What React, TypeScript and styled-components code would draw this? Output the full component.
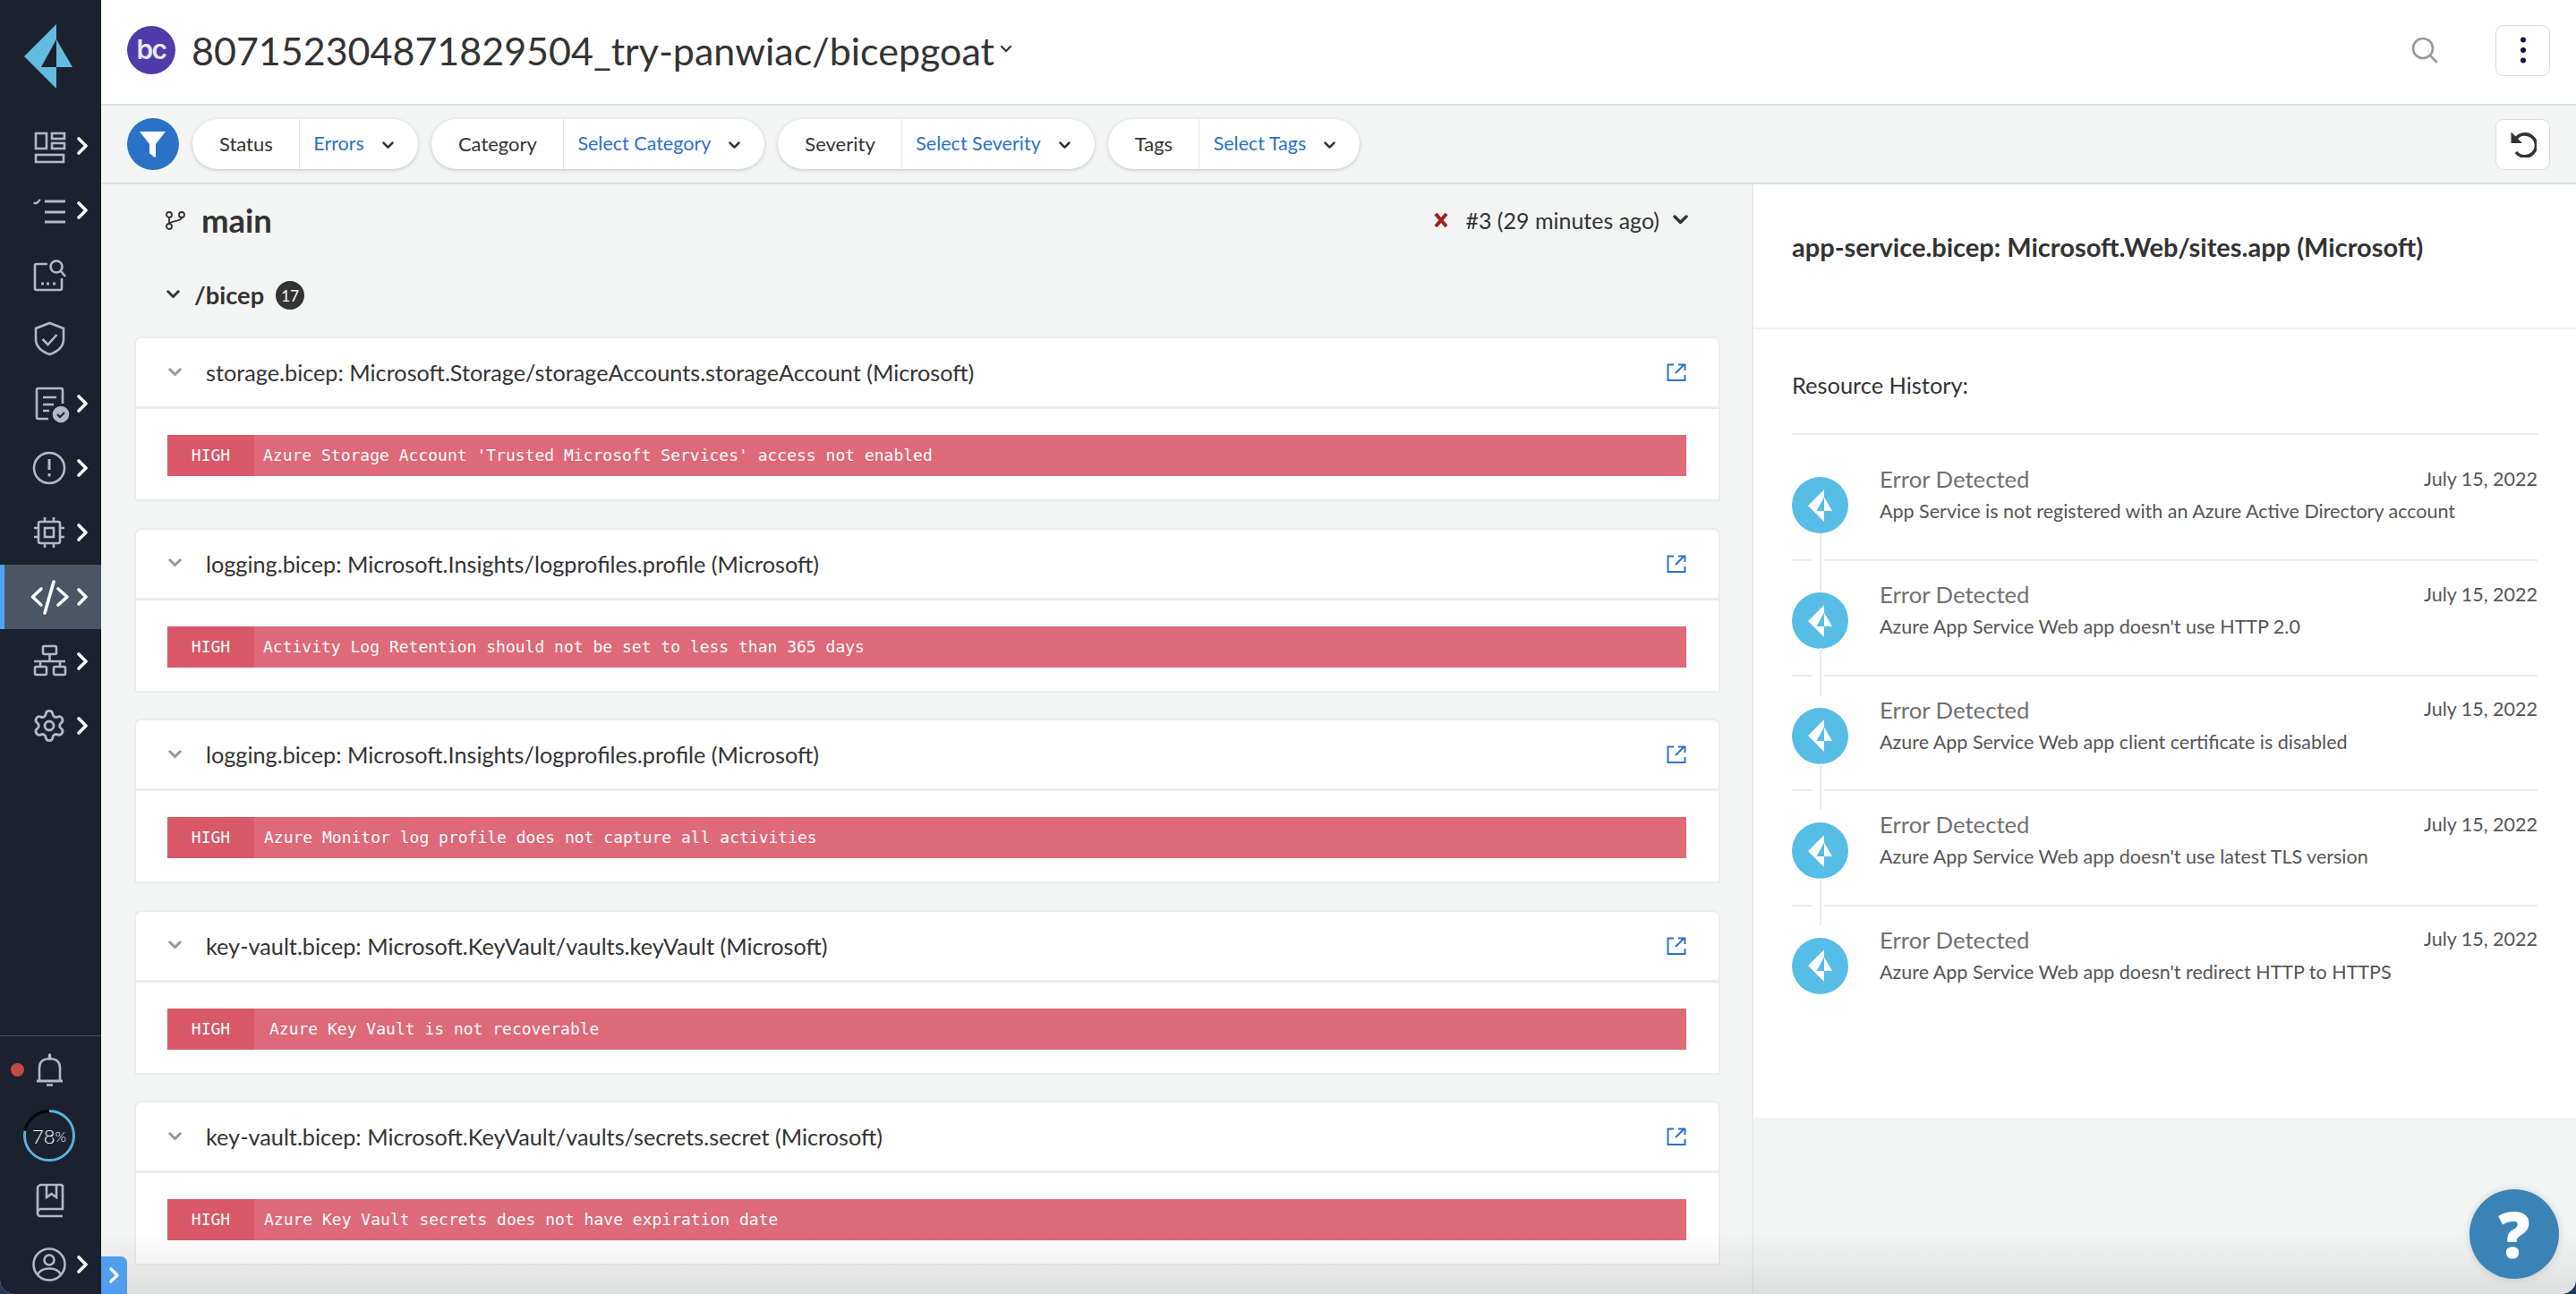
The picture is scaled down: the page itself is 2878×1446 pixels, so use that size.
import React from 'react';
import styled, { createGlobalStyle } from 'styled-components';
import { Settings } from 'lucide-react';

const GlobalStyle = createGlobalStyle`
  html, body {
    margin: 0;
    height: 100%;
    background: #1d3a5c;
    overflow: hidden;
  }
  #root { height: 100%; }
  * { box-sizing: border-box; }
`;

const Page = styled.div`
  position: relative;
  display: flex;
  width: 2878px;
  height: 1446px;
  overflow: hidden;
  border-radius: 0 0 16px 16px;
  background: #f3f5f4;
  font-family: Lato, 'Open Sans', sans-serif;
  color: #333;
`;

const BottomShade = styled.div`
  position: absolute;
  left: 113px;
  right: 0;
  bottom: 0;
  height: 70px;
  pointer-events: none;
  background: linear-gradient(to bottom, rgba(0, 0, 0, 0), rgba(0, 0, 0, 0.09));
`;

/* sidebar */
const Sidebar = styled.nav`
  display: flex;
  flex-direction: column;
  flex: none;
  width: 113px;
  height: 100%;
  overflow: hidden;
  background: #1b212d;
`;

const LogoSlot = styled.div`
  flex: none;
  height: 127px;
  padding: 27px 0 0 27px;
  svg { display: block; }
`;

const NavItem = styled.div<{ $active?: boolean }>`
  position: relative;
  display: flex;
  flex: none;
  align-items: center;
  height: 72px;
  color: ${(p) => (p.$active ? '#fff' : '#b3b8c4')};
  background: ${(p) => (p.$active ? '#4a5666' : 'transparent')};
  border-left: ${(p) => (p.$active ? '5px solid #4da3f5' : '0')};
  padding-left: ${(p) => (p.$active ? '30px' : '35px')};
  svg.nav-icon { flex: none; overflow: visible; }
`;

const NavChevron = styled.svg`
  flex: none;
  margin-left: 11px;
`;

const SidebarBottom = styled.div`
  display: flex;
  flex-direction: column;
  margin-top: auto;
  margin-bottom: -3px;
  padding-top: 3px;
  border-top: 1px solid #4a5060;
`;

const RedDot = styled.span`
  position: absolute;
  left: 12px;
  top: 27px;
  width: 15px;
  height: 15px;
  border-radius: 50%;
  background: #c44a40;
`;

const RingWrap = styled.div`
  position: relative;
  width: 60px;
  height: 60px;
  margin-left: -10px;
  svg { display: block; }
`;

const RingLabel = styled.span`
  position: absolute;
  inset: 0;
  display: flex;
  align-items: center;
  justify-content: center;
  color: #fff;
  font-size: 22px;
  font-weight: 300;
  small { font-size: 16px; }
`;

const CollapseTab = styled.div`
  position: absolute;
  left: 113px;
  bottom: 0;
  display: flex;
  align-items: center;
  justify-content: center;
  width: 29px;
  height: 42px;
  border-radius: 0 7px 0 0;
  background: #4f9fee;
`;

/* main column */
const Main = styled.div`
  display: flex;
  flex: 1;
  flex-direction: column;
  min-width: 0;
`;

const Header = styled.header`
  display: flex;
  flex: none;
  align-items: center;
  height: 118px;
  padding: 0 29px 4px 29px;
  background: #fff;
  border-bottom: 2px solid #dfe1e1;
`;

const BcBadge = styled.div`
  display: flex;
  flex: none;
  align-items: center;
  justify-content: center;
  width: 54px;
  height: 54px;
  border-radius: 50%;
  background: #4f3baa;
  color: #e9e6f8;
  font-family: Inter, sans-serif;
  font-size: 30px;
  font-weight: 600;
  letter-spacing: -1.5px;
  padding-bottom: 3px;
`;

const RepoTitle = styled.h1`
  margin: 2px 0 0 18px;
  font-size: 43px;
  font-weight: 400;
  line-height: 54px;
  color: #333;
`;

const RepoCaret = styled.svg`
  flex: none;
  margin: 0 0 2px 6px;
`;

const HeaderActions = styled.div`
  display: flex;
  align-items: center;
  margin-left: auto;
`;

const SearchButton = styled.span`
  display: flex;
  margin-right: 64px;
`;

const SquareButton = styled.button`
  display: flex;
  align-items: center;
  justify-content: center;
  width: 61px;
  height: 57px;
  padding: 0;
  background: #fff;
  border: 1px solid #dcdcdc;
  border-radius: 9px;
`;

const FilterBar = styled.div`
  display: flex;
  flex: none;
  align-items: center;
  gap: 15px;
  height: 88px;
  padding: 0 29px;
  border-bottom: 2px solid #dfe1e1;
`;

const FunnelButton = styled.div`
  flex: none;
  width: 58px;
  height: 58px;
  border-radius: 50%;
  background: #2a72c8;
  svg { display: block; }
`;

const Pill = styled.div`
  display: flex;
  flex: none;
  align-items: stretch;
  height: 56px;
  border-radius: 28px;
  background: #fff;
  box-shadow: 0 1px 4px rgba(0, 0, 0, 0.2);
  font-size: 21.5px;
`;

const PillLabel = styled.span`
  display: flex;
  align-items: center;
  padding: 0 29px 2px 30px;
  border-right: 1px solid #e3e5e5;
  color: #333;
  font-size: 22px;
`;

const PillValue = styled.span`
  display: flex;
  align-items: center;
  padding: 0 27px 2px 15.5px;
  color: #2a72c8;
  svg { margin-left: 20px; margin-top: 5px; }
`;

const ResetSlot = styled.div`
  margin-left: auto;
`;

const Content = styled.div`
  display: flex;
  flex: 1;
  min-height: 0;
`;

/* left list of findings */
const Findings = styled.section`
  flex: none;
  width: 1844px;
  padding: 0 35px 0 37px;
  overflow: hidden;
`;

const BranchRow = styled.div`
  display: flex;
  align-items: center;
  height: 80px;
  padding: 0 36px 0 34px;
`;

const BranchName = styled.h2`
  margin: 0 0 0 17px;
  font-size: 36.5px;
  font-weight: 700;
  color: #333;
`;

const RunInfo = styled.div`
  display: flex;
  align-items: center;
  margin-left: auto;
  font-size: 25px;
  color: #333;
  span { margin: 0 15px 0 19px; }
`;

const FolderRow = styled.div`
  display: flex;
  align-items: center;
  height: 86px;
  margin-bottom: 4px;
  padding-left: 36px;
`;

const FolderName = styled.span`
  margin-left: 16px;
  font-size: 27.3px;
  font-weight: 700;
  color: #333;
`;

const CountBadge = styled.span`
  display: flex;
  align-items: center;
  justify-content: center;
  width: 32px;
  height: 32px;
  margin: 2px 0 0 13px;
  border-radius: 50%;
  background: #333;
  color: #fff;
  font-size: 17px;
`;

const CardList = styled.div`
  display: flex;
  flex-direction: column;
  gap: 29.5px;
`;

const Card = styled.article`
  flex: none;
  height: 184px;
  background: #fff;
  border: 2px solid #ececec;
  border-top-left-radius: 8px;
  border-top-right-radius: 8px;
`;

const CardHead = styled.div`
  display: flex;
  align-items: center;
  height: 79px;
  padding: 0 36px;
  border-bottom: 3px solid #ececec;
`;

const CardTitle = styled.span`
  margin-left: 27px;
  font-size: 25.25px;
  color: #333;
`;

const ExternalLink = styled.svg`
  flex: none;
  margin-left: auto;
`;

const CardBody = styled.div`
  padding: 29px 36px 0 35px;
`;

const SeverityBar = styled.div`
  display: flex;
  align-items: stretch;
  height: 46px;
  background: #de6978;
  color: #fff;
  font-family: 'DejaVu Sans Mono', monospace;
  font-size: 18px;
  line-height: 46px;
`;

const SeverityTag = styled.span`
  flex: none;
  width: 97px;
  text-align: center;
  background: #d85868;
`;

const SeverityText = styled.span<{ $indent: number }>`
  padding-left: ${(p) => p.$indent}px;
  white-space: pre;
`;

/* right panel with the resource history */
const Aside = styled.aside`
  flex: 1;
  min-width: 0;
  border-left: 2px solid #e8e9ec;
`;

const AsideHead = styled.div`
  display: flex;
  align-items: center;
  height: 162px;
  padding: 0 43px 22px;
  background: #fff;
  border-bottom: 2px solid #f1f2f3;
  font-size: 29px;
  font-weight: 700;
  color: #333;
`;

const HistoryPanel = styled.div`
  height: 881px;
  padding: 0 43px 0 43px;
  background: #fff;
`;

const HistoryTitle = styled.div`
  display: flex;
  align-items: center;
  height: 118px;
  border-bottom: 2px solid #e9e9ee;
  padding-top: 8px;
  font-size: 25.4px;
  color: #333;
`;

const HistoryRow = styled.div<{ $first?: boolean; $last?: boolean }>`
  position: relative;
  display: flex;
  height: ${(p) => (p.$first ? '141px' : '128.5px')};
  padding-top: ${(p) => (p.$first ? '35px' : '23px')};
  border-bottom: ${(p) => (p.$last ? '0' : '2px solid #e9e9ee')};

  ${(p) =>
    !p.$last &&
    `&::before {
      content: '';
      position: absolute;
      left: 22px;
      bottom: -2px;
      width: 14px;
      height: 2px;
      background: #fff;
    }
    &::after {
      content: '';
      position: absolute;
      left: 31px;
      top: ${p.$first ? '110px' : '97px'};
      bottom: -${p.$first ? '35px' : '23px'};
      width: 2px;
      background: #e9e9ee;
    }`}
`;

const RowIcon = styled.div`
  flex: none;
  display: flex;
  align-items: center;
  justify-content: center;
  width: 63px;
  height: 63px;
  margin-top: 12px;
  border-radius: 50%;
  background: #55bde6;
`;

const RowText = styled.div`
  flex: 1;
  min-width: 0;
  margin-left: 35px;
`;

const RowTop = styled.div`
  display: flex;
  align-items: center;
  justify-content: space-between;
  height: 30px;
  margin-top: -1px;
`;

const RowStatus = styled.span`
  font-size: 25.7px;
  color: #707070;
`;

const RowDate = styled.span`
  margin-top: -1px;
  font-size: 21.5px;
  color: #555;
`;

const RowDescription = styled.div`
  margin-top: 6px;
  font-size: 21.5px;
  line-height: 30px;
  color: #555;
`;

const HelpButton = styled.div`
  position: absolute;
  left: 2759px;
  top: 1329px;
  display: flex;
  align-items: center;
  justify-content: center;
  width: 100px;
  height: 100px;
  border-radius: 50%;
  background: #3a83b7;
  box-shadow: 0 0 10px rgba(0, 0, 0, 0.15);
  color: #fff;
  font-family: 'Open Sans', sans-serif;
  font-size: 70px;
  font-weight: 800;
  line-height: 1;
`;

const Chevron = () => (
  <NavChevron width="12" height="22" viewBox="0 0 12 22" fill="none">
    <path d="M2 3l8 8-8 8" stroke="#fff" strokeWidth="3.6" strokeLinecap="round" strokeLinejoin="round" />
  </NavChevron>
);

const NavSvg = ({ children }: { children: React.ReactNode }) => (
  <svg className="nav-icon" width="40" height="40" viewBox="0 0 40 40" fill="none" stroke="currentColor" strokeWidth="2.6">
    {children}
  </svg>
);

const PrismaMark = ({ size, color }: { size: number; color: string }) => (
  <svg width={(size * 54) / 72} height={size} viewBox="27 27 54 72" fill={color}>
    <path d="M63 27L27 63l36 36V75H46l17-31z" />
    <path d="M63 44l18 31H63z" />
  </svg>
);

const SmallCaret = ({ color = '#333', size = 13 }: { color?: string; size?: number }) => (
  <svg width={size} height={size * 0.7} viewBox="0 0 13 9" fill="none">
    <path d="M1.5 1.5l5 5 5-5" stroke={color} strokeWidth="2.6" strokeLinecap="round" strokeLinejoin="round" />
  </svg>
);

const navIcons: React.ReactNode[] = [
  <NavSvg key="dash">
    <rect x="5" y="6" width="12" height="17" />
    <rect x="23" y="6" width="14" height="6" />
    <rect x="23" y="17" width="14" height="6" />
    <rect x="5" y="30" width="31" height="8" />
  </NavSvg>,
  <NavSvg key="list">
    <path d="M2.5 12H6l4-4" strokeWidth="2.4" />
    <path d="M15 10h23M15 22h23M15 33h23" strokeWidth="3" />
  </NavSvg>,
  <NavSvg key="scan">
    <path d="M18 8H6a2 2 0 0 0-2 2v25a2 2 0 0 0 2 2h26a2 2 0 0 0 2-2V24" />
    <circle cx="28" cy="11" r="6.5" />
    <path d="M33 16l5 6" />
    <path d="M11 30h3M17 30h3M24 30h3" strokeWidth="3" />
  </NavSvg>,
  <NavSvg key="shield">
    <path d="M20.500 2L36 8v12c0 9-7 14-15.500 17C12 34 5 29 5 20V8z" />
    <path d="M12.500 20l6 6 10-11" />
  </NavSvg>,
  <NavSvg key="report">
    <path d="M35 20V5a2 2 0 0 0-2-2H8a2 2 0 0 0-2 2v30a2 2 0 0 0 2 2h11" />
    <path d="M13 13h15M13 21h12M13 28h7" />
    <circle cx="33" cy="32" r="8" fill="currentColor" />
    <path d="M29 32l3 3 5-5" stroke="#1b212d" strokeWidth="2.2" />
  </NavSvg>,
  <NavSvg key="alert">
    <circle cx="20" cy="20" r="17" />
    <path d="M20 10v12" strokeWidth="3" />
    <path d="M20 26v3.500" strokeWidth="3" />
  </NavSvg>,
  <NavSvg key="chip">
    <rect x="8" y="8" width="24" height="24" rx="2" />
    <rect x="15" y="15" width="10" height="10" />
    <path d="M15 3v5M25 3v5M15 32v5M25 32v5M3 15h5M3 25h5M32 15h5M32 25h5" />
  </NavSvg>,
  <NavSvg key="code">
    <path d="M11 11l-9.500 9 9.500 9M30 11l10 9-10 9" strokeWidth="3.6" strokeLinecap="round" strokeLinejoin="round" />
    <path d="M25 3l-10 35" strokeWidth="3.6" strokeLinecap="round" />
  </NavSvg>,
  <NavSvg key="network">
    <rect x="13" y="3" width="15" height="9" rx="1.500" />
    <rect x="4" y="26" width="13" height="9" rx="1.500" />
    <rect x="25" y="26" width="13" height="9" rx="1.500" />
    <path d="M20.500 12v8M3 20h35M10 20v6M32 20v6" />
  </NavSvg>,
  <Settings key="gear" className="nav-icon" size={40} strokeWidth={1.7} />,
];

const chevronRows = [true, true, false, false, true, true, true, true, true, true];

const filters = [
  { label: 'Status', value: 'Errors' },
  { label: 'Category', value: 'Select Category' },
  { label: 'Severity', value: 'Select Severity' },
  { label: 'Tags', value: 'Select Tags' },
];

const findings = [
  {
    title: 'storage.bicep: Microsoft.Storage/storageAccounts.storageAccount (Microsoft)',
    message: "Azure Storage Account 'Trusted Microsoft Services' access not enabled",
    indent: 10,
  },
  {
    title: 'logging.bicep: Microsoft.Insights/logprofiles.profile (Microsoft)',
    message: 'Activity Log Retention should not be set to less than 365 days',
    indent: 10,
  },
  {
    title: 'logging.bicep: Microsoft.Insights/logprofiles.profile (Microsoft)',
    message: 'Azure Monitor log profile does not capture all activities',
    indent: 11,
  },
  {
    title: 'key-vault.bicep: Microsoft.KeyVault/vaults.keyVault (Microsoft)',
    message: 'Azure Key Vault is not recoverable',
    indent: 17,
  },
  {
    title: 'key-vault.bicep: Microsoft.KeyVault/vaults/secrets.secret (Microsoft)',
    message: 'Azure Key Vault secrets does not have expiration date',
    indent: 11,
  },
];

const history = [
  'App Service is not registered with an Azure Active Directory account',
  "Azure App Service Web app doesn't use HTTP 2.0",
  'Azure App Service Web app client certificate is disabled',
  "Azure App Service Web app doesn't use latest TLS version",
  "Azure App Service Web app doesn't redirect HTTP to HTTPS",
];

export default function App() {
  return (
    <Page>
      <GlobalStyle />
      <Sidebar>
        <LogoSlot>
          <PrismaMark size={72} color="#63bbe0" />
        </LogoSlot>
        {navIcons.map((icon, i) => (
          <NavItem key={i} $active={i === 7}>
            {icon}
            {chevronRows[i] && <Chevron />}
          </NavItem>
        ))}
        <SidebarBottom>
          <NavItem>
            <RedDot />
            <NavSvg>
              <path d="M9 30V16C9 9 14 6 20.500 6S32 9 32 16v14" />
              <path d="M20.500 2v4" strokeWidth="3.4" strokeLinecap="round" />
              <path d="M6 31h29" strokeWidth="3" />
              <path d="M17 35.500h7" strokeWidth="2.6" />
            </NavSvg>
          </NavItem>
          <NavItem>
            <RingWrap>
              <svg width="60" height="60" viewBox="0 0 60 60" fill="none" strokeWidth="3">
                <circle cx="30" cy="30" r="27.500" stroke="#050608" />
                <circle
                  cx="30"
                  cy="30"
                  r="27.500"
                  stroke="#5ab4dc"
                  pathLength={100}
                  strokeDasharray="78 22"
                  transform="rotate(-90 30 30)"
                />
              </svg>
              <RingLabel>
                78<small>%</small>
              </RingLabel>
            </RingWrap>
          </NavItem>
          <NavItem>
            <NavSvg>
              <path d="M35 3H11a4 4 0 0 0-4 4v28a3 3 0 0 0 3 3h25" />
              <path d="M35 3v27H11a4 4 0 0 0-4 4" />
              <path d="M17 3v14l5.500-4 5.500 4V3" />
            </NavSvg>
          </NavItem>
          <NavItem>
            <NavSvg>
              <circle cx="20" cy="20" r="17.500" />
              <circle cx="20" cy="15" r="5.500" />
              <path d="M7 31c3-5 8-6.500 13-6.500S30 26 33 31" />
            </NavSvg>
            <Chevron />
          </NavItem>
        </SidebarBottom>
      </Sidebar>

      <Main>
        <Header>
          <BcBadge>bc</BcBadge>
          <RepoTitle>807152304871829504_try-panwiac/bicepgoat</RepoTitle>
          <RepoCaret width="14" height="10" viewBox="0 0 14 10" fill="none">
            <path d="M2 2l5 5 5-5" stroke="#333" strokeWidth="2.2" strokeLinecap="round" />
          </RepoCaret>
          <HeaderActions>
            <SearchButton>
              <svg width="30" height="30" viewBox="0 0 30 30" fill="none" stroke="#999" strokeWidth="2.6">
                <circle cx="13" cy="13" r="11" />
                <path d="M21 21l7 7" strokeLinecap="round" />
              </svg>
            </SearchButton>
            <SquareButton>
              <svg width="8" height="30" viewBox="0 0 8 30" fill="#14123c">
                <circle cx="4" cy="3.500" r="3" />
                <circle cx="4" cy="15" r="3" />
                <circle cx="4" cy="26.500" r="3" />
              </svg>
            </SquareButton>
          </HeaderActions>
        </Header>

        <FilterBar>
          <FunnelButton>
            <svg width="58" height="58" viewBox="0 0 58 58" fill="#fff">
              <path d="M14 15h29L32 29v13.500q0 1.500-1.500 1L25 39.500V29z" />
            </svg>
          </FunnelButton>
          {filters.map((f) => (
            <Pill key={f.label}>
              <PillLabel>{f.label}</PillLabel>
              <PillValue>
                {f.value}
                <SmallCaret />
              </PillValue>
            </Pill>
          ))}
          <ResetSlot>
            <SquareButton>
              <svg width="30" height="30" viewBox="0 0 30 30" fill="none" stroke="#333">
                <path d="M6.500 9.500A12.500 12.500 0 1 1 7 24" strokeWidth="3.600" />
                <path d="M1.500 1.500v12.500h12.500z" fill="#333" stroke="none" />
              </svg>
            </SquareButton>
          </ResetSlot>
        </FilterBar>

        <Content>
          <Findings>
            <BranchRow>
              <svg width="24" height="24" viewBox="0 0 24 24" fill="none" stroke="#333" strokeWidth="1.800">
                <circle cx="5" cy="6" r="3" />
                <circle cx="19" cy="6" r="3" />
                <circle cx="5" cy="19" r="3" />
                <path d="M5 9v7M19 9c0 5-12 3-14 7" />
              </svg>
              <BranchName>main</BranchName>
              <RunInfo>
                <svg width="16" height="16" viewBox="0 0 16 16" fill="none">
                  <path d="M2 1l12 14M14 1L2 15" stroke="#a32020" strokeWidth="4" />
                </svg>
                <span>#3 (29 minutes ago)</span>
                <SmallCaret size={17} />
              </RunInfo>
            </BranchRow>
            <FolderRow>
              <SmallCaret size={15} />
              <FolderName>/bicep</FolderName>
              <CountBadge>17</CountBadge>
            </FolderRow>
            <CardList>
              {findings.map((f) => (
                <Card key={f.message}>
                  <CardHead>
                    <SmallCaret color="#999" size={15} />
                    <CardTitle>{f.title}</CardTitle>
                    <ExternalLink width="22" height="20" viewBox="0 0 22 20" fill="none" stroke="#2a72c8" strokeWidth="2">
                      <path d="M8 1.500H1.500v17.500h19v-6" />
                      <path d="M10 11L19 2M13 1.500h7.500V8" />
                    </ExternalLink>
                  </CardHead>
                  <CardBody>
                    <SeverityBar>
                      <SeverityTag>HIGH</SeverityTag>
                      <SeverityText $indent={f.indent}>{f.message}</SeverityText>
                    </SeverityBar>
                  </CardBody>
                </Card>
              ))}
            </CardList>
          </Findings>

          <Aside>
            <AsideHead>app-service.bicep: Microsoft.Web/sites.app (Microsoft)</AsideHead>
            <HistoryPanel>
              <HistoryTitle>Resource History:</HistoryTitle>
              {history.map((text, i) => (
                <HistoryRow key={text} $first={i === 0} $last={i === history.length - 1}>
                  <RowIcon>
                    <PrismaMark size={36} color="#fff" />
                  </RowIcon>
                  <RowText>
                    <RowTop>
                      <RowStatus>Error Detected</RowStatus>
                      <RowDate>July 15, 2022</RowDate>
                    </RowTop>
                    <RowDescription>{text}</RowDescription>
                  </RowText>
                </HistoryRow>
              ))}
            </HistoryPanel>
          </Aside>
        </Content>
      </Main>

      <BottomShade />
      <CollapseTab>
        <svg width="14" height="20" viewBox="0 0 14 20" fill="none">
          <path d="M3 3l7 7-7 7" stroke="#fff" strokeWidth="3.400" strokeLinecap="round" strokeLinejoin="round" />
        </svg>
      </CollapseTab>
      <HelpButton>?</HelpButton>
    </Page>
  );
}
